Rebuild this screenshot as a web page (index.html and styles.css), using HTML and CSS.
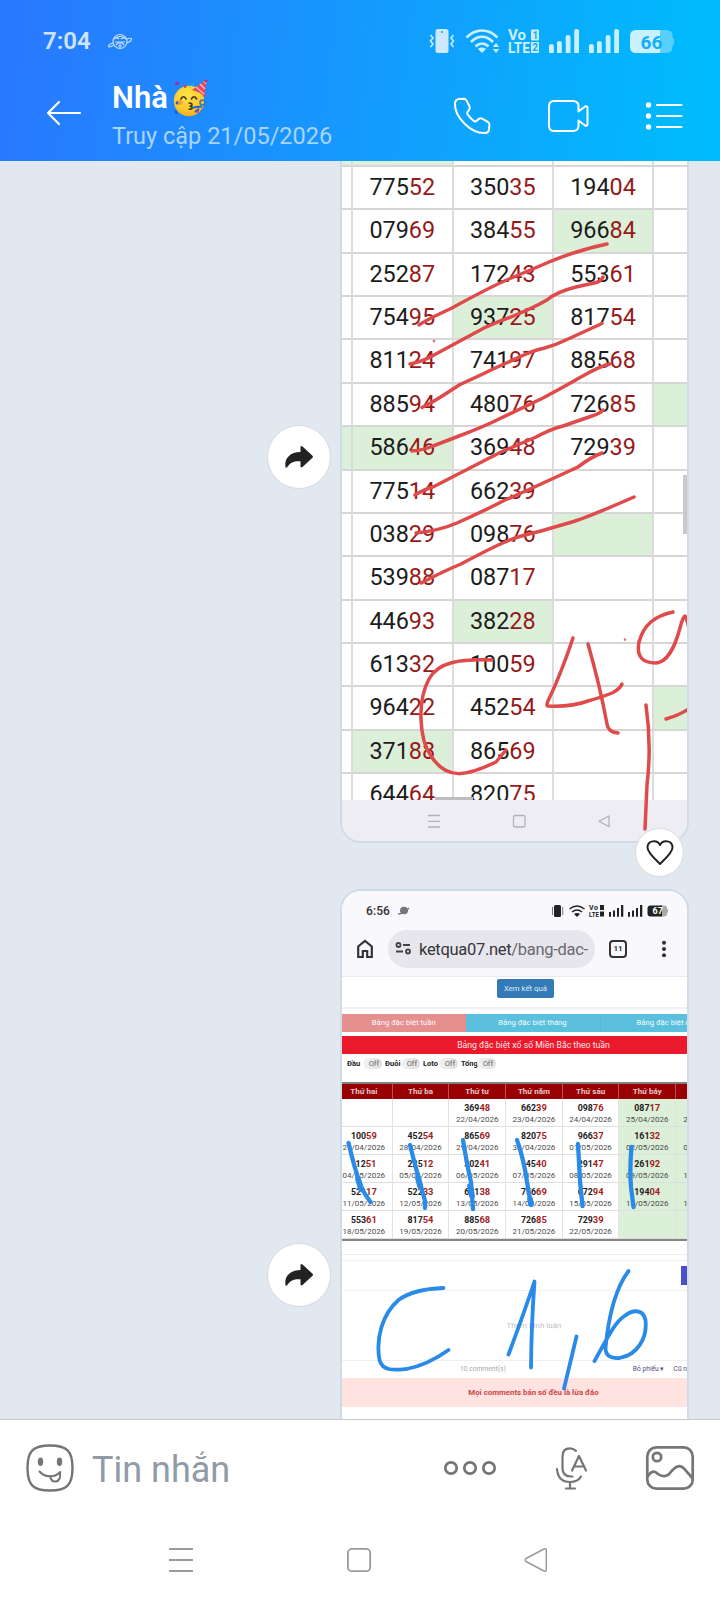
FILE: index.html
```html
<!DOCTYPE html>
<html lang="vi">
<head>
<meta charset="utf-8">
<title>Nhà</title>
<link rel="stylesheet" href="styles.css">
</head>
<body>
<header class="top">
  <div class="status">
    <span class="clock">7:04</span>
    <svg class="planet" viewBox="108 33 25 17" width="25" height="17" fill="none" stroke="currentColor" stroke-width="1.200"><circle cx="120" cy="41.500" r="7"/><path d="M113 43c-4 1-5 3-4 4 2 0 3-1 5-2M126.500 39c3-1 5-1 5 0 0 2-2 3-4.500 4M114 39c2-2 4-1 5 0M121 39c2-2 4-1 5 0M115 42h10M116 45l3-3M124 45l-3-3M120 42v6M117 37l6-1M118 46h4"/></svg>
    <svg class="sysicons" viewBox="429 26 246 30" width="246" height="30" fill="currentColor">
      <rect x="435.500" y="29" width="13" height="24" rx="2.500" fill="#cce9ff"/><circle cx="442" cy="32" r="1" fill="#159dff"/>
      <path d="M430.500 35l2.500 3-2.500 3 2.500 3-2.500 3M453.500 35l-2.500 3 2.500 3-2.500 3 2.500 3" fill="none" stroke="currentColor" stroke-width="1.600"/>
      <g fill="none" stroke="currentColor" stroke-width="2.600"><path d="M466.500 37.500c9-9.300 22-9.300 31 0M471 42c7-6.800 15-6.800 22 0M475.500 46.500c4-4 9-4 13 0"/></g>
      <path d="M478 49c2-2 6-2 8 0l-4 4zM492.800 47h6.400L496 43zM492.800 49h6.400L496 53z"/>
      <text class="net" x="508" y="40" textLength="18">Vo</text><text class="net" x="508" y="53" textLength="22" lengthAdjust="spacingAndGlyphs">LTE</text>
      <rect x="531" y="29.500" width="8" height="11" rx="1"/><rect x="531" y="42" width="8" height="11" rx="1"/>
      <text class="sim" x="532.500" y="38.500">1</text><text class="sim" x="532.200" y="51">2</text>
      <path d="M549 45.500q0-1.500 2.400-1.500t2.400 1.500V53H549zM557 42.500q0-1.500 2.400-1.500t2.400 1.500V53H557zM565.700 36.500q0-1.500 2.400-1.500t2.400 1.500V53h-4.800zM574.200 30.500q0-1.500 2.400-1.500t2.400 1.500V53h-4.800z"/>
      <path d="M589 45.500q0-1.500 2.400-1.500t2.400 1.500V53H589zM597 42.500q0-1.500 2.400-1.500t2.400 1.500V53H597zM605.700 36.500q0-1.500 2.400-1.500t2.400 1.500V53h-4.800zM614.200 30.500q0-1.500 2.400-1.500t2.400 1.500V53h-4.800z"/>
      <path d="M660 30h6q6.500 0 6.500 6v1.500q1.800.5 1.800 4t-1.800 4V47q0 6-6.500 6h-6z" fill="#57cfff"/>
      <path d="M636 30h24v23h-24q-6 0-6-6V36q0-6 6-6z"/>
      <text class="batt" x="640.500" y="49">66</text>
    </svg>
  </div>
  <div class="titlebar">
    <svg class="back" viewBox="45 99 38 28" width="38" height="28" fill="none" stroke="#fff" stroke-width="2.200" stroke-linecap="round" stroke-linejoin="round"><path d="M80 113H48M59 102l-11 11 11 11"/></svg>
    <div class="who">
      <div class="name"><span class="nm">Nhà</span>
        <svg class="party" viewBox="173 79 37 38" width="37" height="38" role="img" aria-label="party face">
          <defs><radialGradient id="face" cx=".45" cy=".3" r=".8"><stop offset="0" stop-color="#ffe24a"/><stop offset=".6" stop-color="#fccb2b"/><stop offset="1" stop-color="#ee9c1c"/></radialGradient></defs>
          <circle cx="190" cy="101" r="15.200" fill="url(#face)"/>
          <path d="M193 90l14-10-1 17q-5-5-13-7z" fill="#e9485a"/><path d="M197 87l8 7M201 84l5 5M205 81.500l2 2" stroke="#f7b6bd" stroke-width="1.500"/><circle cx="206.800" cy="81" r="1.500" fill="#d92a3b"/>
          <ellipse cx="178" cy="83.500" rx="2.300" ry="1.800" fill="#a52bb5"/><path d="M190 86l4-3 1 1-4 2.500z" fill="#16b9e8"/><circle cx="186" cy="86.500" r="1.400" fill="#e5383b"/>
          <path d="M182 99c1-3 4-3 5 0M192.500 99c1-3 4-3 5 0" fill="none" stroke="#43301c" stroke-width="1.700" stroke-linecap="round"/>
          <ellipse cx="180" cy="102.500" rx="3.500" ry="2.500" fill="#f28a45" opacity=".75"/><circle cx="178" cy="103" r="1.400" fill="#2366c9"/>
          <path d="M189.500 103c5 0 4 3 1 3.300 4 0 4 3.200-1 3" fill="none" stroke="#43301c" stroke-width="1.500"/>
          <path d="M193 107.500l10-1" stroke="#2467c4" stroke-width="2"/><circle cx="203.500" cy="102.500" r="2.500" fill="none" stroke="#3278c7" stroke-width="1.500"/>
          <path d="M176 111l2 3M196 112l4-3" stroke="#2753c9" stroke-width="2"/><circle cx="199" cy="112" r="1.300" fill="#e94b6b"/>
        </svg>
      </div>
      <div class="seen">Truy cập 21/05/2026</div>
    </div>
    <svg class="actions" viewBox="450 94 236 44" width="236" height="44" fill="none" stroke="#fff" stroke-width="2" stroke-linejoin="round" stroke-linecap="round">
      <path d="M459.500 99l4.500-.3q1.500 0 2.500 1.700l3 6q1 1.800-.3 3.200l-1.700 2.400q-.8 1.300.2 2.600 3 4 6.500 6.500 1.300.8 2.300-.2l2.500-2q1.300-1 3-.2l6 3.300q1.700 1 1.400 3l-.4 4.500q-.5 3.500-4 3.500c-14 .5-31-16-30-30q.3-3.500 4.500-4z"/>
      <path d="M554 101h19q5.500 0 5.500 5.500v5l6.500-5q2.500-.8 2.500 1.500v16q0 2.500-2.500 1.500l-6.500-5v5q0 5.500-5.500 5.500h-19q-5 0-5-5.500v-19q0-5.500 5-5.500z"/>
      <path d="M657 105h24.500M657 116h24.500M657 127h24.500"/><g fill="#fff" stroke="none"><circle cx="648.500" cy="105" r="2.700"/><circle cx="648.500" cy="116" r="2.700"/><circle cx="648.500" cy="127" r="2.700"/></g>
    </svg>
  </div>
</header>

<main class="chat">
  <section class="msg">
    <button class="share"><svg viewBox="284 445 30 24" width="30" height="24"><path d="M285.500 467c-1.500-9 5-15 15-15v-4.500q0-2.500 2-1l10 9.200q1 1 0 2.100l-10 9.200q-2 1.300-2-1v-4.700c-6-.4-10 .7-13 5.500q-1.500 2-2 .2z" fill="#222"/></svg></button>
    <div class="photo first">
      <div class="nums">
        <b class="g n"></b><b class="g"></b><b></b><b></b><b></b>
        <b></b><b>775<i>52</i></b><b>350<i>35</i></b><b>194<i>04</i></b><b></b>
        <b></b><b>079<i>69</i></b><b>384<i>55</i></b><b class="g">966<i>84</i></b><b></b>
        <b></b><b>252<i>87</i></b><b>172<i>43</i></b><b>553<i>61</i></b><b></b>
        <b></b><b>754<i>95</i></b><b class="g">937<i>25</i></b><b>817<i>54</i></b><b></b>
        <b></b><b>811<i>24</i></b><b>741<i>97</i></b><b>885<i>68</i></b><b></b>
        <b></b><b>885<i>94</i></b><b>480<i>76</i></b><b>726<i>85</i></b><b class="g"></b>
        <b class="g"></b><b class="g">586<i>46</i></b><b>369<i>48</i></b><b>729<i>39</i></b><b></b>
        <b></b><b>775<i>14</i></b><b>662<i>39</i></b><b></b><b></b>
        <b></b><b>038<i>29</i></b><b>098<i>76</i></b><b class="g"></b><b></b>
        <b></b><b>539<i>88</i></b><b>087<i>17</i></b><b></b><b></b>
        <b></b><b>446<i>93</i></b><b class="g">382<i>28</i></b><b></b><b></b>
        <b></b><b>613<i>32</i></b><b>100<i>59</i></b><b></b><b></b>
        <b></b><b>964<i>22</i></b><b>452<i>54</i></b><b></b><b class="g"></b>
        <b></b><b class="g">371<i>88</i></b><b>865<i>69</i></b><b></b><b></b>
        <b></b><b>644<i>64</i></b><b>820<i>75</i></b><b></b><b></b>
      </div>
      <div class="mininav">
        <svg viewBox="342 800 345 41" width="345" height="41" fill="none" stroke="#b3b2b7" stroke-width="1.300"><path d="M428 815.500h12M428 821.300h12M428 827h12"/><rect x="513.500" y="815.500" width="11.500" height="11.500" rx="2"/><path d="M599 821.300l10-5.300v10.600z" stroke-linejoin="round"/></svg>
      </div>
      <svg class="ink" viewBox="342 161 345 680" width="345" height="680" fill="none" stroke="#df4a4a" stroke-width="3.500" stroke-linecap="round" stroke-linejoin="round">
        <path d="M685 475v59" stroke="#c9c9c9" stroke-width="4" stroke-linecap="butt"/><path d="M435 798.500h38" stroke="#bdbdbd" stroke-width="3" stroke-linecap="butt"/>
        <path d="M419 325q5-4 32-16.500Q492 286 509 279q24-10 40-17 29-12 58-18"/>
        <path d="M410 364q14-3 24-9l50-27q15-7 27-11 22-9 36-17 9-8 29-13l18-4q7-1 9-6"/>
        <path d="M422 407q12-6 21-12l17-11q20-9 32-15l33-15q12-5 18-6 12-3 24-9l35-16" transform="translate(0 .5)"/>
        <path d="M412 451q12-1 21-5l26-10q24-9 38-16l46-22q26-14 38-21 19-11 29-13"/>
        <path d="M415 495q10-6 18-8l68-35q26-11 35-15 15-8 27-11l29-10q9-3 11-6"/>
        <path d="M416 533q22-2 41-10 31-14 46-22 23-10 38-17l37-17q13-10 24-14"/>
        <path d="M421 583q23-12 40-19 32-17 44-22 10-5 36-11l31-9q14-4 62-25"/>
        <path d="M492 660c-33-1-54 2-63 19-12 22-10 60 2 77 16 25 36 20 65 6l10-12"/>
        <path d="M573 638q-12 36-25 63-2 5 0 5 24 1 40-5 14-4 24-8 8-4 10-9M588 644q12 42 19 80 1 8 11 9"/>
        <path d="M673 612c-18 4-29 12-34 30-3 15 4 21 17 21 11-1 18-13 24-35q3-12 5-12 3 5 4 14M646 705c4 28 4 55 1 80l-2 44M666 719q14-4 24-11"/>
        <path d="M434 341v.1M625 639.500v.1" stroke-width="2.600" opacity=".8"/>
      </svg>
    </div>
    <button class="heart"><svg viewBox="645 839 30 28" width="30" height="28" fill="none" stroke="#222" stroke-width="2" stroke-linejoin="round"><path d="M660 864C655 859 647.500 852.500 647.500 847.500c0-7 9.500-8.500 12.500-2.500 3-6 12.500-4.500 12.500 2.500 0 5-7.500 11.500-12.500 16.500z"/></svg></button>
  </section>

  <section class="msg two">
    <button class="share"><svg viewBox="284 445 30 24" width="30" height="24"><path d="M285.500 467c-1.500-9 5-15 15-15v-4.500q0-2.500 2-1l10 9.200q1 1 0 2.100l-10 9.200q-2 1.300-2-1v-4.700c-6-.4-10 .7-13 5.500q-1.500 2-2 .2z" fill="#222"/></svg></button>
    <div class="photo second">
      <div class="browser">
        <div class="bstatus"><span>6:56</span>
          <svg viewBox="397 905 14 11" width="14" height="11"><ellipse cx="404" cy="910.500" rx="4" ry="3.800" fill="#777"/><path d="M398 914q6 0 11-6" stroke="#777" stroke-width="1.300" fill="none"/></svg>
          <svg class="bicons" viewBox="551 903 118 16" width="118" height="16" fill="#222">
            <rect x="554" y="905" width="7" height="12" rx="1.500"/><path d="M552.500 907v8M562.700 907v8" stroke="#777" stroke-width="1"/>
            <path d="M569.500 909q7.500-6 15 0M572 912q5-4 10 0" fill="none" stroke="#222" stroke-width="1.400"/><path d="M574 914q3-2 6 0l-3 3z"/>
            <text class="bnet" x="589" y="910" textLength="9">Vo</text><text class="bnet" x="589" y="917" textLength="10" lengthAdjust="spacingAndGlyphs">LTE</text><path d="M600 905h4v5h-4zM600 911.500h4v5h-4z"/>
            <path d="M609 912h2v4.700h-2zM613 910.500h2v6.200h-2zM617 908h2v8.700h-2zM621 905h2.300v11.700H621zM628 912h2v4.700h-2zM632 910.500h2v6.200h-2zM636 908h2v8.700h-2zM640 905h2.300v11.700H640z"/>
            <path d="M660 905.500h4q3 0 3 2.500v1l1 .5v3l-1 .5v1q0 2.500-3 2.500h-4z" fill="#aaa"/><path d="M650.500 905.500H662v11h-11.500q-3 0-3-3v-5q0-3 3-3z"/><text class="bbatt" x="652.500" y="914.300">67</text>
          </svg>
        </div>
        <div class="bbar">
          <svg viewBox="356 939 18 20" width="18" height="20" fill="none" stroke="#333338" stroke-width="2.200"><path d="M358.200 957V946.500L365 941l6.800 5.500V957h-4.600v-6h-4.400v6z"/></svg>
          <div class="pill"><svg viewBox="395 943 17 14" width="17" height="14" fill="none" stroke="#444" stroke-width="1.800"><circle cx="398.500" cy="946" r="2"/><path d="M403 946h7M396 952.500h7"/><circle cx="408" cy="952.500" r="2"/></svg><span class="url">ketqua07.net<em>/bang-dac-</em></span></div>
          <span class="tabs">11</span>
          <svg viewBox="660 940 8 18" width="8" height="18" fill="#333"><circle cx="664" cy="942.800" r="2"/><circle cx="664" cy="949" r="2"/><circle cx="664" cy="955.200" r="2"/></svg>
        </div>
      </div>
      <div class="page">
        <div class="cta"><span>Xem kết quả</span></div>
        <div class="tabrow"><span class="t1">Bảng đặc biệt tuần</span><span class="t2">Bảng đặc biệt tháng</span><span class="t3">Bảng đặc biệt c</span></div>
        <div class="redbar">Bảng đặc biệt xổ số Miền Bắc theo tuần</div>
        <div class="toggles"><b>Đầu</b><span>Off</span><b>Đuôi</b><span>Off</span><b>Loto</b><span>Off</span><b>Tổng</b><span>Off</span></div>
        <div class="week">
          <p>Thứ hai</p><p>Thứ ba</p><p>Thứ tư</p><p>Thứ năm</p><p>Thứ sáu</p><p>Thứ bảy</p><p></p>
          <div></div><div></div><div><b>369<i>48</i></b>22/04/2026</div><div><b>662<i>39</i></b>23/04/2026</div><div><b>098<i>76</i></b>24/04/2026</div><div class="g"><b>087<i>17</i></b>25/04/2026</div><div class="g l"><b>&nbsp;</b>2</div>
          <div><b>100<i>59</i></b>27/04/2026</div><div><b>452<i>54</i></b>28/04/2026</div><div><b>865<i>69</i></b>29/04/2026</div><div><b>820<i>75</i></b>30/04/2026</div><div><b>966<i>37</i></b>01/05/2026</div><div class="g"><b>161<i>32</i></b>02/05/2026</div><div class="g l"><b>&nbsp;</b>0</div>
          <div><b>&nbsp;&nbsp;12<i>51</i></b>04/05/2026</div><div><b>225<i>12</i></b>05/05/2026</div><div><b>302<i>41</i></b>06/05/2026</div><div><b>&nbsp;&nbsp;45<i>40</i></b>07/05/2026</div><div><b>291<i>47</i></b>08/05/2026</div><div class="g"><b>261<i>92</i></b>09/05/2026</div><div class="g l"><b>&nbsp;</b>1</div>
          <div><b>521<i>17</i></b>11/05/2026</div><div><b>522<i>33</i></b>12/05/2026</div><div><b>601<i>38</i></b>13/05/2026</div><div><b>756<i>69</i></b>14/05/2026</div><div><b>672<i>94</i></b>15/05/2026</div><div class="g"><b>194<i>04</i></b>16/05/2026</div><div class="g l"><b>&nbsp;</b>1</div>
          <div><b>553<i>61</i></b>18/05/2026</div><div><b>817<i>54</i></b>19/05/2026</div><div><b>885<i>68</i></b>20/05/2026</div><div><b>726<i>85</i></b>21/05/2026</div><div><b>729<i>39</i></b>22/05/2026</div><div class="g"></div><div class="g"></div>
        </div>
        <div class="gap"></div>
        <div class="send"><span></span></div>
        <div class="comment">Thêm bình luận</div>
        <div class="meta"><span class="m1">10 comment(s)</span><span class="m2">Bỏ phiếu ▾</span><span class="m3">Cũ n</span></div>
        <div class="warn">Mọi comments bán số đều là lừa đảo</div>
      </div>
      <svg class="ink" viewBox="342 891 345 528" width="345" height="528" fill="none" stroke="#2a8ae8" stroke-width="4.300" stroke-linecap="round" stroke-linejoin="round">
        <path d="M348.500 1143q6 25 11 39 2 8 11 20M410 1145q5 20 9 34l6 22v7M463 1140q4 25 8 42l2 27M517 1140q7 20 10 42l4 23M578 1144l2 37 2.500 25M631.500 1147q-2 22-.5 40l2.500 20"/>
        <path stroke-width="5.800" d="M358 1179l3 10M418 1178l2 8M470 1186l2 10M530 1199l1 5"/>
        <path stroke-width="3.800" d="M443.500 1288q-30 1-45 12c-16 14-23 38-19 60 3 12 17 10 27 9q21-4 42-19M508.500 1354.500q15-40 26-73-3 40-3.500 86M576.500 1336.500l-12.500 52M628.500 1271q-18 24-23 77 0 11 14 10c18-3 28-20 26-38-3-13-15-9-21-4-9 6-14 16-30 45"/>
      </svg>
    </div>
  </section>
</main>

<footer class="composer">
  <svg class="smile" viewBox="26 1444 48 48" width="48" height="48" fill="none" stroke="#757575" stroke-width="2.400" stroke-linecap="round"><path d="M50 1445.500c17 0 22.500 5.500 22.500 22.500S67 1490.500 50 1490.500 27.500 1485 27.500 1468 33 1445.500 50 1445.500z"/><ellipse cx="40.500" cy="1461.800" rx="2.700" ry="4.200" fill="#757575" stroke="none"/><ellipse cx="59.500" cy="1461.800" rx="2.700" ry="4.200" fill="#757575" stroke="none"/><path d="M39.500 1471.500c5 6 15 6.500 20.700.5M50 1476q1 6 6 5.500 5-1 4-9" stroke-width="2"/></svg>
  <span class="field">Tin nhắn</span>
  <svg class="tools" viewBox="440 1440 256 56" width="256" height="56" fill="none" stroke="#757575" stroke-width="2.700" stroke-linecap="round" stroke-linejoin="round">
    <circle cx="451" cy="1468" r="5.700"/><circle cx="470" cy="1468" r="5.700"/><circle cx="489" cy="1468" r="5.700"/>
    <g stroke-width="2.200"><path d="M576 1450.800q-3-2.500-6-2.500-7.500 0-7.500 8v12q0 8 8 8.200h2M557 1469q1 13 13 13 8 0 11-5.500M570 1482v6.500M566 1488.500h9"/><path d="M572 1470.500l7-14.500 7 14.500M574.500 1466.500h9"/></g>
    <rect x="647.300" y="1447.300" width="45.400" height="41.400" rx="9"/><circle cx="657" cy="1457" r="4.200"/><path d="M648 1476c4-6 7-5 10-2 4 3 9 3 12-1 8-10 12-8 17-1q3 3 5 6"/>
  </svg>
</footer>
<nav class="sysnav">
  <svg viewBox="168 1546 380 28" width="380" height="28" fill="none" stroke="#9a9a9a" stroke-width="1.800" stroke-linejoin="round"><path d="M169 1549h24M169 1560h24M169 1571h24"/><rect x="347.900" y="1548.900" width="22.300" height="22.300" rx="4"/><path d="M526 1558.500l18-9.500q2.300-.8 2.300 1.500v19q0 2.300-2.300 1.500l-18-9.500q-2-1.500 0-3z" stroke-width="1.500"/></svg>
</nav>
</body>
</html>
```

FILE: styles.css
```css
* { box-sizing: border-box; }
body { margin: 0; width: 720px; height: 1604px; overflow: hidden; background: #fff; font-family: Roboto, "Noto Sans", sans-serif; display: flex; flex-direction: column; }
svg { display: block; flex: none; }
button { border: 1px solid #d5dae0; background: #fff; border-radius: 50%; padding: 0; display: flex; align-items: center; justify-content: center; flex: none; }

.top { height: 161px; flex: none; background: linear-gradient(97deg, #2979ff 3%, #00bbfc 97%); z-index: 2; }
.status { height: 74px; padding: 26px 45px 0 43px; display: flex; align-items: flex-start; color: #c8f0ff; }
.clock { font-size: 24px; font-weight: 600; color: #cfe5ff; width: 65px; line-height: 28px; margin-top: 1px; }
.planet { color: #c2dcff; margin-top: 7px; }
.sysicons { margin-left: auto; }
.net { font: 700 15px Roboto, sans-serif; }
.sim { font: 700 10px Roboto, sans-serif; fill: #10a8fc; }
.batt { font: 700 19px Roboto, sans-serif; fill: #10aefc; }
.titlebar { display: flex; height: 87px; }
.back { margin: 25px 29px 0 45px; }
.who { width: 338px; }
.name { display: flex; height: 43px; color: #fff; }
.nm { font-size: 31px; font-weight: 600; line-height: 36px; width: 60px; margin-top: 6px; }
.party { margin-top: 5px; }
.seen { font-size: 23.500px; line-height: 28px; margin-top: 5px; color: #a9d4ff; white-space: nowrap; }
.actions { margin-top: 20px; }

.chat { height: 1258px; flex: none; overflow: hidden; background: #e1e8f0; display: flex; flex-direction: column; gap: 46px; }
.msg { height: 682px; flex: none; display: flex; justify-content: flex-end; padding-right: 31px; gap: 9px; position: relative; }
.share { width: 64px; height: 64px; margin-top: 264px; }
.photo { position: relative; width: 349px; border: 2px solid #cddce8; overflow: hidden; background: #fff; }
.first { border-top: 0; border-radius: 0 0 21px 21px; }
.two .share { margin-top: 354px; }
.second { border-radius: 21px 21px 0 0; border-bottom: 0; }
.heart { position: absolute; left: 635px; top: 667px; width: 49px; height: 49px; }
.ink { position: absolute; left: 0; top: 0; }

.nums { height: 639px; overflow: hidden; display: grid; grid-template-columns: 11px 100.500px 100.500px 100px 33px; grid-template-rows: 6px; grid-auto-rows: 43.360px; }
.nums b { font-weight: 400; font-size: 23.400px; line-height: 40px; color: #1c1c1c; text-align: center; border-right: 2px solid #dcdcdc; border-bottom: 2px solid #d6d6d6; overflow: hidden; }
.nums b:nth-child(5n) { border-right: 0; }
.nums i { font-style: normal; color: #961a1a; }
.nums .g, .week .g { background: #dcefd9; }
.mininav { height: 41px; background: #eeedf3; }

.browser { height: 86px; background: #f9f8fd; border-bottom: 1px solid #eaeaee; }
.bstatus { height: 39px; display: flex; align-items: center; padding: 0 18px 0 24px; font-size: 12px; font-weight: 500; color: #333; letter-spacing: .1px; }
.bstatus span { width: 31px; }
.bicons { margin-left: auto; }
.bnet { font: 700 7px Roboto, sans-serif; }
.bbatt { font: 700 9px Roboto, sans-serif; fill: #fff; }
.bbar { display: flex; align-items: center; padding-left: 14px; }
.pill { margin-left: 14px; width: 207px; height: 38px; border-radius: 19px; background: #e7e6ec; display: flex; align-items: center; padding-left: 7px; gap: 7px; }
.url { font-size: 16.500px; letter-spacing: -.3px; color: #35353a; white-space: nowrap; }
.url em { font-style: normal; color: #6a6a70; }
.tabs { width: 18px; height: 18px; border: 2px solid #333; border-radius: 4px; margin: 0 33px 0 14px; font-size: 8px; font-weight: 700; line-height: 14px; text-align: center; color: #333; }

.page { font-size: 8px; color: #444; }
.cta { height: 32px; display: flex; justify-content: center; padding: 2px 0 0 22px; border-bottom: 2px solid #f1f1f4; }
.cta span { width: 57px; height: 19px; border-radius: 2px; background: #337ab7; color: #dcebf7; font-size: 7.800px; line-height: 19px; text-align: center; }
.tabrow { margin-top: 5px; height: 18px; display: flex; color: #f4fbff; font-size: 7.700px; line-height: 18px; white-space: nowrap; background: #5bc0de; overflow: hidden; }
.tabrow span { flex: none; }
.t1 { width: 123.500px; background: #e68f8f; text-align: center; }
.t2 { width: 135px; border-right: 1px solid #54b7d5; text-align: center; }
.t3 { padding-left: 36px; }
.redbar { margin-top: 4px; height: 18px; background: #ea1a2c; color: #ffe4e4; font-size: 8.700px; line-height: 18px; text-align: center; padding-left: 38px; }
.toggles { display: flex; align-items: center; padding: 1px 0 0 5px; height: 18px; color: #222; font-size: 7.500px; }
.toggles b { width: 16px; white-space: nowrap; }
.toggles span { width: 19px; height: 11px; line-height: 11px; border-radius: 6px; background: linear-gradient(90deg, #f4f4f4, #dedede); color: #666; text-align: right; padding-right: 3px; margin: 0 3px 0 0; }
.week { margin: 10px 0 0 -6px; border-top: 2px solid #808080; border-bottom: 2px solid #858585; display: grid; grid-template-columns: repeat(7, 56.700px); grid-template-rows: 15px; grid-auto-rows: 28.100px; }
.week p { margin: 0; background: #980004; color: #e6caca; font-weight: 700; font-size: 8px; line-height: 15px; text-align: center; border-right: 1px solid #b85353; }
.week div { font-size: 8px; line-height: 12px; text-align: center; border-right: 1px solid #e2e2e2; border-bottom: 1px solid #dedede; padding-top: 2.500px; color: #4c4c4c; }
.week .l { text-align: left; padding-left: 7px; }
.week b { display: block; font-size: 8.800px; line-height: 12px; color: #222; }
.week i { font-style: normal; font-size: 9.400px; color: #a51d1d; }
.gap { margin-top: 13px; height: 7px; border: 1px solid #eee; border-width: 1px 0; }
.send { height: 30px; border-bottom: 1px solid #f1f1f1; display: flex; justify-content: flex-end; padding-top: 5px; }
.send span { width: 6px; height: 19px; background: #4b4fce; }
.comment { height: 70px; line-height: 70px; padding-left: 39px; text-align: center; color: #c2c2c2; border-bottom: 1px solid #f0f0f0; }
.meta { height: 17px; line-height: 17px; font-size: 6.700px; display: flex; white-space: nowrap; color: #aaa; }
.m1 { margin-left: 118px; width: 174px; }
.m2 { width: 41px; color: #55527a; }
.m3 { color: #55527a; }
.warn { height: 29px; line-height: 29px; background: #ffe3e0; color: #cf4545; font-weight: 700; font-size: 7.850px; text-align: center; padding-left: 38px; }

.composer { height: 101px; flex: none; border-top: 1px solid #c5c9cd; display: flex; background: #fff; }
.smile { margin: 24px 18px 0 26px; }
.field { font-size: 36px; line-height: 42px; margin-top: 29px; color: #8f9ba5; width: 348px; }
.tools { margin-top: 20px; }
.sysnav { height: 84px; padding: 26px 0 0 168px; }
```
